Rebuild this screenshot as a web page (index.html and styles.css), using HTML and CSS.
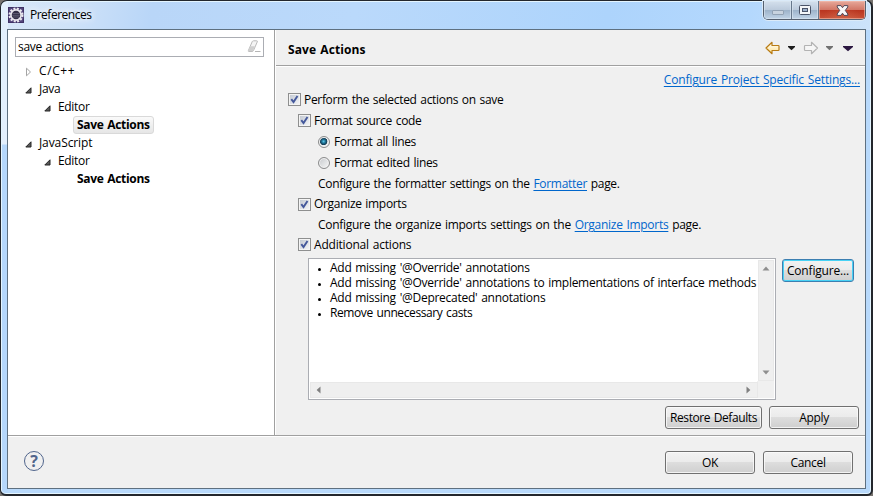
FILE: index.html
```html
<!DOCTYPE html>
<html lang="en">
<head>
<meta charset="utf-8">
<title>Preferences</title>
<link rel="stylesheet" href="styles.css">
</head>
<body>
<div class="window">
  <header class="titlebar">
    <svg class="app-icon" width="16" height="16" viewBox="0 0 16 16">
      <rect width="16" height="16" fill="#54457c"/>
      <rect x=".5" y=".5" width="15" height="15" fill="none" stroke="#3f3265"/>
      <circle cx="8" cy="8" r="6.4" fill="none" stroke="#eceaf0" stroke-width="2.2" stroke-dasharray="2 1.35"/>
      <circle cx="8" cy="8" r="5.100" fill="#322e45" stroke="#e6e4ea" stroke-width="1.7"/>
      <path d="M4.500 6.500h7M4.200 8.300h7.600M4.900 10h6.200" stroke="#6d6a80" stroke-width=".7"/>
    </svg>
    <span class="title">Preferences</span>
    <div class="controls">
      <div class="ctl min"><svg width="12" height="5" viewBox="0 0 12 5"><rect x=".5" y=".5" width="11" height="4" rx=".5" fill="#c8d3df" stroke="#92a2b4"/></svg></div>
      <div class="ctl max"><svg width="12" height="10" viewBox="0 0 12 10"><rect x=".5" y=".5" width="11" height="9" rx="1" fill="#f4f6f8" stroke="#4b5468"/><rect x="3.500" y="3.500" width="5" height="3" fill="#9db1cb" stroke="#4b5468"/></svg></div>
      <div class="ctl close"><svg width="13" height="11" viewBox="0 0 13 11"><path d="M1.200 .6H5L6.500 2.700 8 .6H11.800V2L9.300 5.400 11.800 9V10.400H8L6.500 8.200 5 10.400H1.200V9L3.700 5.400 1.200 2z" fill="#f8f6f6" stroke="#514858" stroke-linejoin="round"/></svg></div>
    </div>
  </header>

  <main class="client">
    <div class="panes">
      <aside class="nav">
        <div class="filter"><span>save actions</span>
          <svg width="14" height="13" viewBox="0 0 14 13"><path d="M6.500.8h3.200q1 0 .6 1L6.500 10.500q-.4 1-1.400 1H2q-1 0-.6-1L5.200 1.700q.4-.9 1.300-.9z" fill="#f4f4f4" stroke="#b9b9b9"/><path d="M1.300 10.500l2-4.200h4.500L6 11.300H2z" fill="#cfcfcf"/><path d="M8 11.500h5.500" stroke="#b5b5b5"/></svg>
        </div>
        <ul class="tree">
          <li><svg class="tw closed" width="7" height="10" viewBox="0 0 7 10"><path d="M1.500 1.200v7.600L5.500 5z" fill="#fff" stroke="#a5a5a5"/></svg><span class="cpp">C/C++</span></li>
          <li><svg class="tw" width="7" height="7" viewBox="0 0 7 7"><path d="M6 .8V6H.8z" fill="#595959" stroke="#262626"/></svg><span>Java</span></li>
          <li class="l2"><svg class="tw" width="7" height="7" viewBox="0 0 7 7"><path d="M6 .8V6H.8z" fill="#595959" stroke="#262626"/></svg><span>Editor</span></li>
          <li class="l3"><span class="leaf selected">Save Actions</span></li>
          <li><svg class="tw" width="7" height="7" viewBox="0 0 7 7"><path d="M6 .8V6H.8z" fill="#595959" stroke="#262626"/></svg><span class="js">JavaScript</span></li>
          <li class="l2"><svg class="tw" width="7" height="7" viewBox="0 0 7 7"><path d="M6 .8V6H.8z" fill="#595959" stroke="#262626"/></svg><span>Editor</span></li>
          <li class="l3"><span class="leaf">Save Actions</span></li>
        </ul>
      </aside>

      <section class="page">
        <div class="page-head">
          <h1>Save Actions</h1>
          <svg width="90" height="14" viewBox="0 0 90 14">
            <defs><linearGradient id="gold" x2="0" y2="1"><stop stop-color="#fff"/><stop offset="1" stop-color="#ffe08a"/></linearGradient></defs>
            <path d="M1 7l6-5.700V4.500h6.300q.7 0 .7.700v3.600q0 .7-.7.700H7v3.200z" fill="url(#gold)" stroke="#b87b14" stroke-width="1.200" stroke-linejoin="round"/>
            <path d="M23 5h7v1l-3.500 3.300L23 6z" fill="#1d1d1d"/>
            <path d="M52.500 7l-6-5.700V4.500h-6.300q-.7 0-.7.700v3.600q0 .7.700.700h6.300v3.200z" fill="#f6f6f6" stroke="#b3b3b3" stroke-width="1.200" stroke-linejoin="round"/>
            <path d="M61 5h7v1l-3.500 3.300L61 6z" fill="#717171"/>
            <path d="M78 5h10v1l-5 4.300L78 6z" fill="#2b1740"/>
          </svg>
        </div>
        <div class="page-body">
          <div class="project-link"><a>Configure Project Specific Settings...</a></div>
          <div class="row"><i class="check"><svg viewBox="0 0 9 9"><path d="M1.300 4.200L3.500 7 7.500.9" fill="none" stroke="#44589b" stroke-width="1.900"/></svg></i><span>Perform the selected actions on save</span></div>
          <div class="row in1"><i class="check"><svg viewBox="0 0 9 9"><path d="M1.300 4.200L3.500 7 7.500.9" fill="none" stroke="#44589b" stroke-width="1.900"/></svg></i><span>Format source code</span></div>
          <div class="row in2"><i class="radio on"></i><span>Format all lines</span></div>
          <div class="row in2"><i class="radio"></i><span>Format edited lines</span></div>
          <div class="row in2"><span>Configure the formatter settings on the <a class="fmt">Formatter</a> page.</span></div>
          <div class="row in1 short"><i class="check"><svg viewBox="0 0 9 9"><path d="M1.300 4.200L3.500 7 7.500.9" fill="none" stroke="#44589b" stroke-width="1.900"/></svg></i><span>Organize imports</span></div>
          <div class="row in2"><span class="org">Configure the organize imports settings on the <a>Organize Imports</a> page.</span></div>
          <div class="row in1 last"><i class="check"><svg viewBox="0 0 9 9"><path d="M1.300 4.200L3.500 7 7.500.9" fill="none" stroke="#44589b" stroke-width="1.900"/></svg></i><span class="add">Additional actions</span></div>
          <div class="actions">
            <div class="listbox">
              <ul class="items">
                <li>Add missing '@Override' annotations</li>
                <li>Add missing '@Override' annotations to implementations of interface methods</li>
                <li>Add missing '@Deprecated' annotations</li>
                <li class="casts">Remove unnecessary casts</li>
              </ul>
              <div class="vbar">
                <svg width="8" height="5" viewBox="0 0 8 5"><path d="M.5 4.500h7L4 .6z" fill="#8e8e8e"/></svg>
                <svg width="8" height="5" viewBox="0 0 8 5"><path d="M.5.5h7L4 4.400z" fill="#8e8e8e"/></svg>
              </div>
              <div class="hbar">
                <svg width="5" height="8" viewBox="0 0 5 8"><path d="M4.500.5v7L.6 4z" fill="#808080"/></svg>
                <svg width="5" height="8" viewBox="0 0 5 8"><path d="M.5.5v7L4.400 4z" fill="#808080"/></svg>
              </div>
            </div>
            <button class="btn configure">Configure...</button>
          </div>
          <div class="page-buttons"><button class="btn restore">Restore Defaults</button><button class="btn">Apply</button></div>
        </div>
      </section>
    </div>
    <footer class="foot">
      <div class="help">?</div>
      <div class="foot-buttons"><button class="btn">OK</button><button class="btn">Cancel</button></div>
    </footer>
  </main>
</div>
</body>
</html>
```
FILE: styles.css
```css
* { box-sizing: border-box; }
body {
  margin: 0;
  width: 873px;
  height: 496px;
  overflow: hidden;
  background: #77736f;
  font: 12px/15px "Open Sans", "Noto Sans", sans-serif;
  letter-spacing: -0.32px;
  word-spacing: 0.95px;
  color: #000;
}
ul { list-style: none; margin: 0; padding: 0; }
svg { display: block; flex: none; }
a { color: #0066cc; text-decoration: underline; text-underline-offset: 2px; text-decoration-thickness: 1px; }

.window {
  width: 873px;
  height: 496px;
  padding: 0 5px 5px 6px;
  border: 1px solid #23272d;
  border-width: 1px 2px 2px 1px;
  border-radius: 7px 7px 6px 6px;
  background: linear-gradient(#e3effc 0 142px, #b5d7fb 143px) left 0 top 1px / 7px 100% no-repeat,
    linear-gradient(100deg, #d9e8f9 0, #cfe2f8 70px, #b9d6f8 150px, #bad9fb 350px, #add4fc 600px, #b4d8fd 740px, #cde3fa 100%) 0 0 / 100% 29px no-repeat,
    #b8d9fb;
  box-shadow: inset 0 0 0 1px #e4f5ff;
}
.titlebar { display: flex; height: 28px; }
.app-icon { margin: 6px 0 0 1px; }
.title {
  margin: 6px 0 0 6px;
  letter-spacing: -0.5px;
  text-shadow: 0 0 6px #fff, 0 0 8px #fff;
}
.controls {
  display: flex;
  margin-left: auto;
  width: 103px;
  height: 19px;
  border: 1px solid #55606f;
  border-top: 0;
  border-radius: 0 0 5px 5px;
  overflow: hidden;
  box-shadow: 0 0 0 1px #dbeaf8;
}
.ctl {
  display: flex;
  align-items: center;
  justify-content: center;
  width: 28px;
  border-right: 1px solid #67788c;
  box-shadow: inset 0 0 0 1px #dce7f299;
  background: linear-gradient(#d4e0ed 0, #bccbdc 48%, #9cb2c9 50%, #c1d4e7 100%);
}
.ctl.max { width: 27px; }
.ctl.min svg { margin-top: 5px; }
.ctl.close {
  width: 46px;
  border: 0;
  box-shadow: inset 0 0 0 1px #f3bfb199;
  background: radial-gradient(ellipse at 50% 110%, #e2876455, transparent 60%), linear-gradient(#e7a99b 0, #d27767 48%, #b9341f 50%, #c85238 100%);
}

.client {
  display: flex;
  flex-direction: column;
  width: 859px;
  height: 460px;
  border: 1px solid #5e7080;
  background: #f0f0f0;
}
.panes { display: flex; height: 406px; border-bottom: 1px solid #a0a0a0; }
.nav { width: 267px; padding: 7px; border-right: 1px solid #a0a0a0; background: #fff; }
.filter {
  display: flex;
  align-items: center;
  justify-content: space-between;
  width: 249px;
  height: 20px;
  padding: 0 2px 1px;
  border: 1px solid #abadb3;
}
.tree { margin-top: 5px; }
.tree li { display: flex; align-items: center; height: 18px; padding-left: 10px; }
.tree .tw { margin: 2px 7px 0 0; }
.tree span { margin-top: -1px; }
.tree .cpp { letter-spacing: 0.6px; }
.tree .js { letter-spacing: -0.1px; }
.tree .l2 { padding-left: 29px; }
.tree .l3 { padding-left: 58px; }
.tree .leaf {
  height: 18px;
  margin-top: 0;
  padding: 0 3px;
  border: 1px solid transparent;
  border-radius: 3px;
  font-weight: 700;
  line-height: 16px;
}
.leaf.selected { border-color: #d9d9d9; background: linear-gradient(#fafafa, #e6e6e6); }

.page { flex: 1; border-left: 1px solid #fff; }
.page-head {
  display: flex;
  align-items: center;
  justify-content: space-between;
  height: 36px;
  padding: 0 10px 0 12px;
  border-bottom: 1px solid #a0a0a0;
}
.page-head h1 { margin: 4px 0 0; font-size: 12px; letter-spacing: 0.1px; }
.page-head svg { margin-top: 1px; }
.page-body { padding: 5px 5px 0 12px; border-top: 1px solid #fff; }
.project-link { height: 17px; text-align: right; line-height: 15px; letter-spacing: -0.16px; }
.row { display: flex; align-items: center; gap: 3px; height: 21px; white-space: pre; }
.in1 { padding-left: 10px; }
.in2 { padding-left: 30px; gap: 4px; }
.short { height: 20px; }
.short span { margin-top: -1px; }
.last { height: 19px; }
.fmt { letter-spacing: -0.3px; }
.org { letter-spacing: -0.28px; }
.add { letter-spacing: -0.2px; }
.check {
  width: 13px;
  height: 13px;
  padding: 1px;
  border: 1px solid #8e8f8f;
  background: linear-gradient(135deg, #c4cad3, #f3f4f6) content-box, #f4f4f4;
}
.check svg { width: 9px; height: 9px; }
.radio {
  width: 12px;
  height: 12px;
  margin-top: 1px;
  border: 1px solid #8a8b8c;
  border-radius: 50%;
  background: linear-gradient(135deg, #c5c8cc, #f8f8f8);
  box-shadow: inset 0 0 0 1px #f2f2f2;
}
.radio.on { background: radial-gradient(circle at 46% 44%, #5cc8ea 0, #1d7397 1.8px, #12384f 3.4px, #e9edf0 4.1px); }

.actions { display: flex; gap: 6px; margin-top: 4px; padding-left: 20px; }
.listbox {
  display: grid;
  grid-template: 122px 16px / 448px 16px;
  width: 468px;
  height: 142px;
  padding: 1px;
  border: 1px solid #abadb3;
  background: linear-gradient(#f0f0f0, #f0f0f0) 448px 122px / 17px 17px no-repeat, #fff;
}
.items { padding: 0 0 0 20px; }
.items li { position: relative; height: 15px; white-space: nowrap; letter-spacing: -0.27px; }
.items .casts { letter-spacing: -0.4px; }
.items li::before {
  content: "";
  position: absolute;
  left: -12px;
  top: 8px;
  width: 3px;
  height: 3px;
  border-radius: 50%;
  background: #000;
}
.vbar, .hbar { display: flex; align-items: center; justify-content: space-between; background: #efefef; border: 1px solid #e8e8e8; }
.vbar { flex-direction: column; width: 16px; height: 121px; padding: 5px 0 5px; }
.hbar { width: 448px; height: 16px; padding: 0 6px 0 5px; }

.btn {
  width: 90px;
  height: 23px;
  padding: 0;
  border: 1px solid #707070;
  border-radius: 3px;
  background: linear-gradient(#f2f2f2 0, #ebebeb 48%, #dddddd 50%, #cfcfcf 100%);
  box-shadow: inset 0 0 0 1px #fbfbfbcc;
  font: inherit;
  letter-spacing: inherit;
  word-spacing: inherit;
  color: #000;
}
.configure { width: 72px; margin-top: 1px; border-color: #3c7fb1; box-shadow: inset 0 0 0 1px #48d2f5; letter-spacing: -0.17px; }
.restore { width: 97px; letter-spacing: -0.42px; }
.page-buttons { display: flex; justify-content: flex-end; gap: 7px; margin: 6px 1px 0 0; }

.foot { display: flex; justify-content: space-between; flex: 1; padding: 14px 12px 0 16px; border-top: 1px solid #fff; }
.help {
  width: 20px;
  height: 20px;
  border: 1px solid #50658c;
  border-radius: 50%;
  color: #50658c;
  font-size: 16px;
  font-weight: 700;
  line-height: 18px;
  text-align: center;
  letter-spacing: 0;
}
.foot-buttons { display: flex; gap: 8px; }
```
